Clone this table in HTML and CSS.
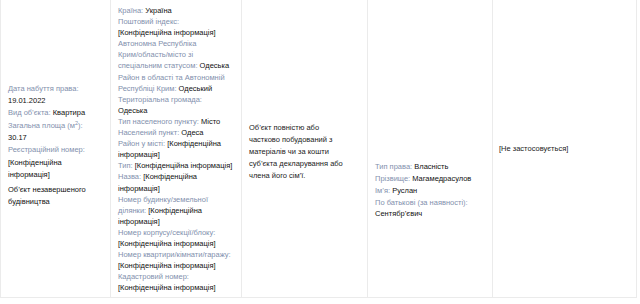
FILE: index.html
```html
<!DOCTYPE html>
<html lang="uk">
<head>
<meta charset="utf-8">
<link rel="stylesheet" href="styles.css">
</head>
<body>
<table class="decl">
<colgroup>
<col class="w1"><col class="w2"><col class="w3"><col class="w4"><col class="w5">
</colgroup>
<tr>
<td class="c1">
<div class="f"><span class="l">Дата набуття права:</span> <span class="v">19.01.2022</span></div>
<div class="f"><span class="l">Вид об’єкта:</span> <span class="v">Квартира</span></div>
<div class="f"><span class="l">Загальна площа (м<sup>2</sup>):</span> <span class="v">30.17</span></div>
<div class="f"><span class="l">Реєстраційний номер:</span> <span class="v">[Конфіденційна інформація]</span></div>
<div class="note">Об’єкт незавершеного будівництва</div>
</td>
<td class="c2">
<div class="f"><span class="l">Країна:</span> <span class="v">Україна</span></div>
<div class="f"><span class="l">Поштовий індекс:</span> <span class="v">[Конфіденційна інформація]</span></div>
<div class="f"><span class="l">Автономна Республіка <span class="nw">Крим/область/місто</span> зі спеціальним статусом:</span> <span class="v">Одеська</span></div>
<div class="f"><span class="l">Район в області та Автономній Республіці Крим:</span> <span class="v">Одеський</span></div>
<div class="f"><span class="l">Територіальна громада:</span><br><span class="v">Одеська</span></div>
<div class="f"><span class="l">Тип населеного пункту:</span> <span class="v">Місто</span></div>
<div class="f"><span class="l">Населений пункт:</span> <span class="v">Одеса</span></div>
<div class="f"><span class="l">Район у місті:</span> <span class="v">[Конфіденційна інформація]</span></div>
<div class="f"><span class="l">Тип:</span> <span class="v">[Конфіденційна інформація]</span></div>
<div class="f"><span class="l">Назва:</span> <span class="v">[Конфіденційна інформація]</span></div>
<div class="f"><span class="l">Номер <span class="nw">будинку/земельної</span> ділянки:</span> <span class="v">[Конфіденційна інформація]</span></div>
<div class="f"><span class="l">Номер <span class="nw">корпусу/секції/блоку:</span></span> <span class="v">[Конфіденційна інформація]</span></div>
<div class="f"><span class="l">Номер <span class="nw">квартири/кімнати/гаражу:</span></span> <span class="v">[Конфіденційна інформація]</span></div>
<div class="f"><span class="l">Кадастровий номер:</span> <span class="v">[Конфіденційна інформація]</span></div>
</td>
<td class="c3">
<div class="t">Об’єкт повністю або частково побудований з матеріалів чи за кошти суб’єкта декларування або члена його сім’ї.</div>
</td>
<td class="c4">
<div class="f"><span class="l">Тип права:</span> <span class="v">Власність</span></div>
<div class="f"><span class="l">Прізвище:</span> <span class="v">Магамедрасулов</span></div>
<div class="f"><span class="l">Ім’я:</span> <span class="v">Руслан</span></div>
<div class="f"><span class="l">По батькові (за наявності):</span> <span class="v">Сентябр’євич</span></div>
</td>
<td class="c5">
<div class="t">[Не застосовується]</div>
</td>
</tr>
</table>
</body>
</html>
```

FILE: styles.css
```css
html, body {
  margin: 0;
  padding: 0;
  background: #ffffff;
}
body {
  font-family: "Liberation Sans", Arial, Helvetica, sans-serif;
  font-size: 7.5px;
  line-height: 11.1px;
  color: #1a1a1a;
}
.decl {
  border-collapse: collapse;
  table-layout: fixed;
  width: 636px;
  margin-top: -1px;
  box-shadow: 0 2px 0 #f1f1f1;
}
.w1 { width: 110px; }
.w2 { width: 131px; }
.w3 { width: 126px; }
.w4 { width: 125px; }
.w5 { width: 144px; }
.decl td {
  border: 1px solid #ebebeb;
  vertical-align: middle;
  padding: 5px 7px;
}
.decl td.c1 { padding-left: 7px; padding-bottom: 11px; line-height: 12.3px; }
.decl td.c2 { vertical-align: top; padding-top: 5px; padding-bottom: 4px; }
.decl td.c3 { padding-top: 12px; padding-right: 18px; line-height: 12px; }
.decl td.c4 { padding-top: 89px; line-height: 11.8px; }
.decl td.c5 { padding-left: 6px; }
.nw { white-space: nowrap; }
.l { color: #8290ad; }
.v { color: #111111; }
sup {
  font-size: 5.5px;
  line-height: 0;
}
.note {
  margin-top: 3px;
  color: #111111;
}
.t { color: #222222; }
```
